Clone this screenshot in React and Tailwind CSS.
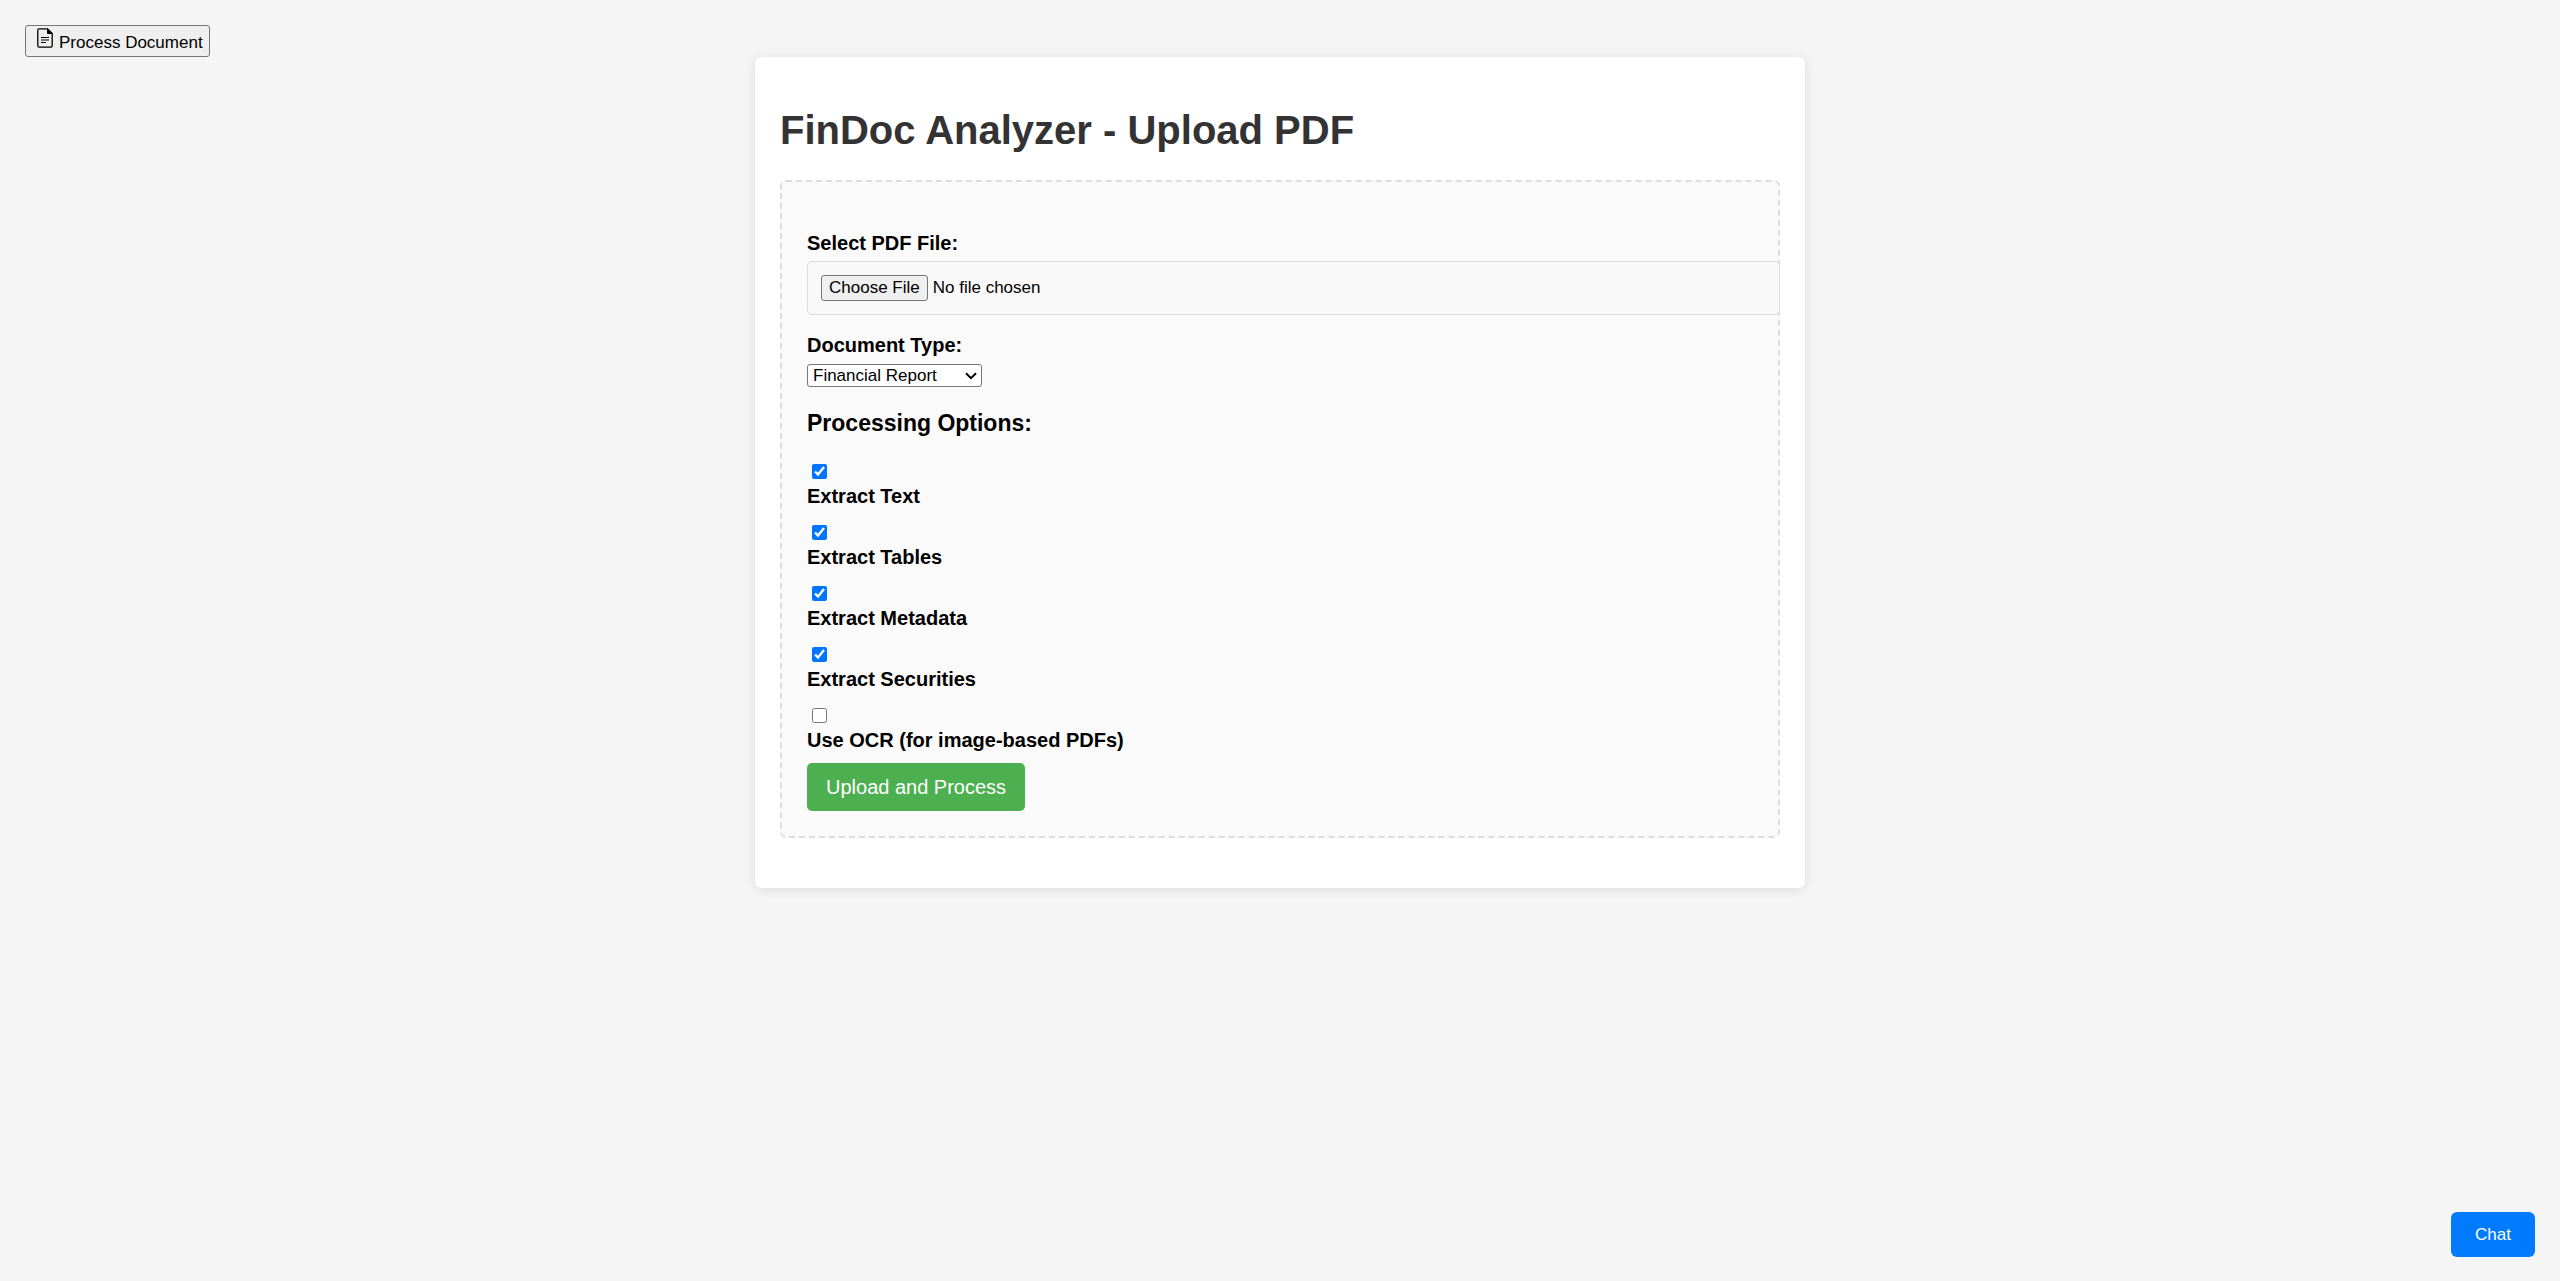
import React from "react";

const options = [
  { id: "extract-text", label: "Extract Text", checked: true },
  { id: "extract-tables", label: "Extract Tables", checked: true },
  { id: "extract-metadata", label: "Extract Metadata", checked: true },
  { id: "extract-securities", label: "Extract Securities", checked: true },
  { id: "use-ocr", label: "Use OCR (for image-based PDFs)", checked: false },
];

function DocumentIcon() {
  return (
    <svg viewBox="0 0 16 20" className="h-5 w-4" fill="none" stroke="#000" aria-hidden="true">
      <path d="M10.5 .8H2.2Q.8 .8 .8 2.2V17.8Q.8 19.2 2.2 19.2H13.8Q15.2 19.2 15.2 17.8V5.5L10.5 .8Z" strokeWidth="1.3" />
      <path d="M10.5 .8V5.5H15.2Z" fill="#000" strokeWidth="1" />
      <path d="M4 9.5H12M4 12H12M4 14.5H9" strokeWidth="1.2" />
    </svg>
  );
}

export default function App() {
  return (
    <div className="flex min-h-screen flex-col bg-[#f5f5f5] p-[25px] font-['Liberation_Sans',Arial,sans-serif] text-xl leading-6 text-black">
      <button
        type="button"
        className="flex h-8 items-start gap-1.5 self-start rounded-[3px] border border-[#767676] bg-[#efefef] pt-0.5 pr-1.5 pl-[11px] text-[17px] leading-[30px]"
      >
        <DocumentIcon />
        Process Document
      </button>

      <main className="mx-auto w-full max-w-[1050px] rounded-md bg-white px-[25px] pt-[50px] pb-[50px] shadow-[0_2px_12px_rgba(0,0,0,0.1)]">
        <h1 className="text-[40px] leading-[46px] font-bold text-[#333]">FinDoc Analyzer - Upload PDF</h1>

        <form className="mt-[27px] rounded-md border-2 border-dashed border-[#ddd] bg-[#fafafa] px-[25px] pt-[49px] pb-[25px]">
          <label htmlFor="pdf-file" className="block font-bold">
            Select PDF File:
          </label>
          <input
            id="pdf-file"
            type="file"
            className="mt-1.5 -mr-[27px] block h-[54px] w-[calc(100%+27px)] rounded-[5px] border border-[#ddd] bg-[#f9f9f9] p-[13px] text-[17px] leading-[26px] file:mr-[5px] file:h-[26px] file:rounded-[3px] file:border file:border-solid file:border-[#767676] file:bg-[#efefef] file:px-[7px] file:leading-[22px]"
          />

          <label htmlFor="document-type" className="mt-[18px] block font-bold">
            Document Type:
          </label>
          <div className="relative mt-[7px] w-[175px]">
            <select
              id="document-type"
              className="block h-[23px] w-full appearance-none rounded-[3px] border border-[#767676] bg-white pl-[5px] text-[17px] leading-5"
            >
              <option>Financial Report</option>
              <option>Portfolio Statement</option>
              <option>Other</option>
            </select>
            <svg
              viewBox="0 0 12 8"
              className="pointer-events-none absolute top-2 right-[5px] h-2 w-3"
              fill="none"
              stroke="#000"
              strokeWidth="2"
              aria-hidden="true"
            >
              <path d="M1 1.2L6 6.2L11 1.2" />
            </svg>
          </div>

          <h3 className="mt-[22px] text-[23px] leading-7 font-bold">Processing Options:</h3>

          <div className="mt-[27px] flex flex-col gap-[18px]">
            {options.map((option) => (
              <div key={option.id}>
                <input
                  id={option.id}
                  type="checkbox"
                  defaultChecked={option.checked}
                  className="ml-[5px] block size-[15px]"
                />
                <label htmlFor={option.id} className="mt-1.5 block leading-[22px] font-bold">
                  {option.label}
                </label>
              </div>
            ))}
          </div>

          <button type="button" className="mt-3 block h-12 rounded-[5px] bg-[#4caf50] px-[19px] text-white">
            Upload and Process
          </button>
        </form>
      </main>

      <button
        type="button"
        className="fixed right-[25px] bottom-6 h-[45px] rounded-md bg-[#007bff] px-6 text-[17px] text-white"
      >
        Chat
      </button>
    </div>
  );
}
